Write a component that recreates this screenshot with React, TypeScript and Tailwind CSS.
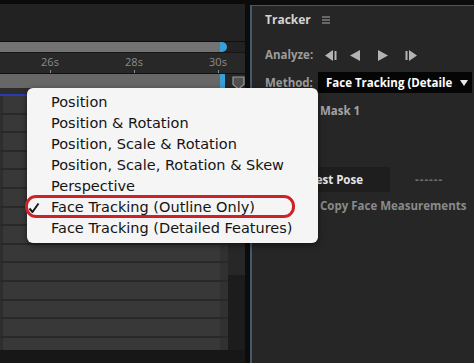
import React from "react";

const menuItems = [
  "Position",
  "Position & Rotation",
  "Position, Scale & Rotation",
  "Position, Scale, Rotation & Skew",
  "Perspective",
  "Face Tracking (Outline Only)",
  "Face Tracking (Detailed Features)",
];

const ruler = ["26s", "28s", "30s"];

function StepBack() {
  return (
    <svg width="12" height="11" viewBox="0 0 12 11">
      <path d="M0 5.5 L8 0 V11 Z" fill="#b4b4b4" />
      <rect x="9.5" y="1" width="2" height="9" fill="#b4b4b4" />
    </svg>
  );
}

function StepForward() {
  return (
    <svg width="12" height="11" viewBox="0 0 12 11">
      <rect x="0.5" y="1" width="2" height="9" fill="#b4b4b4" />
      <path d="M12 5.5 L4 0 V11 Z" fill="#b4b4b4" />
    </svg>
  );
}

function Play({ dir }: { dir: "left" | "right" }) {
  return (
    <svg width="10" height="11" viewBox="0 0 10 11">
      {dir === "left" ? (
        <path d="M0 5.5 L10 0 V11 Z" fill="#b4b4b4" />
      ) : (
        <path d="M10 5.5 L0 0 V11 Z" fill="#b4b4b4" />
      )}
    </svg>
  );
}

function Check() {
  return (
    <svg width="12" height="12" viewBox="0 0 12 12">
      <path d="M1.5 6.5 L4.5 10 L10.5 1.5" fill="none" stroke="#1a1a1a" strokeWidth="2" strokeLinejoin="round" />
    </svg>
  );
}

export default function App() {
  const rows = Array.from({ length: 14 });

  return (
    <div
      className="w-[474px] h-[363px] bg-[#0b0b0b] pt-[4px] flex relative overflow-hidden"
      style={{ fontFamily: "'Open Sans', 'DejaVu Sans', sans-serif" }}
    >
      {/* timeline */}
      <div className="w-[245px] flex flex-col bg-[#222222]">
        <div className="h-[37px]" />
        <div className="h-[1px] bg-[#0f0f0f]" />
        <div className="h-[10px] flex">
          <div className="w-[220px] bg-[#737373]" />
          <div className="w-[7px] bg-[#3b9fd7] rounded-r-full" />
        </div>
        <div className="h-[21px] bg-[#282828] border-t border-[#151515] flex pl-[34px] gap-[52px]">
          {ruler.map((t) => (
            <div key={t} className="w-[32px] flex flex-col items-center">
              <span className="text-[11px] leading-[15px] mt-[1px] text-[#8c8c8c]">{t}</span>
              <span className="w-px h-[3px] mt-[1px] bg-[#8c8c8c]" />
            </div>
          ))}
        </div>
        <div className="h-[1px] bg-[#111]" />
        <div className="h-[14px] flex bg-[#262626]">
          <div className="w-[220px] bg-[#676767]" />
          <div className="w-[5px] bg-[#3b9fd7]" />
          <svg className="ml-[7px] mt-[2px]" width="13" height="14" viewBox="0 0 13 14">
            <path d="M1 1 H12 V8.5 L6.5 13 L1 8.5 Z" fill="#505050" stroke="#9c9c9c" strokeWidth="1.2" />
          </svg>
        </div>
        <div className="h-[6px] bg-[#2c2c2c]" />
        <div className="h-[2px] w-[220px] bg-[#2a3cb3]" />
        <div className="h-[254px] flex overflow-hidden">
          <div className="w-[228px] flex flex-col">
            {rows.map((_, i) => (
              <div key={i} className="h-[18.6px] shrink-0 flex border-b-2 border-[#292929]">
                <div className="w-[3px] bg-[#2e2e2e]" />
                <div className="flex-1 bg-[#383838]" />
                <div className="w-[8px] bg-[#313131]" />
              </div>
            ))}
          </div>
          <div className="w-[17px] flex flex-col">
            <div className="h-[179px] bg-[#272727]" />
            <div className="flex-1 bg-[#1c1c1c]" />
          </div>
        </div>
        <div className="flex-1 bg-[#171717]" />
      </div>

      <div className="w-[5px] bg-[#0c0c0c]" />

      {/* tracker panel */}
      <div className="flex-1 mt-[1px] bg-[#262626] border-l-2 border-t border-[#44596b] pl-[13px] flex flex-col font-bold text-[11.5px]">
        <div className="h-[28px] flex items-center">
          <span className="text-[#d4d4d4] text-[12px]">Tracker</span>
          <svg className="ml-[11px]" width="8" height="8" viewBox="0 0 8 8">
            <path d="M0 1 H8 M0 4 H8 M0 7 H8" stroke="#a8a8a8" strokeWidth="1" />
          </svg>
        </div>
        <div className="h-[22px] mt-[10px] flex items-center">
          <span className="text-[#9c9c9c] w-[60px]">Analyze:</span>
          <StepBack />
          <span className="ml-[13px]">
            <Play dir="left" />
          </span>
          <span className="ml-[18px]">
            <Play dir="right" />
          </span>
          <span className="ml-[17px]">
            <StepForward />
          </span>
        </div>
        <div className="h-[21px] mt-[6px] flex items-center">
          <span className="text-[#9c9c9c] w-[53px]">Method:</span>
          <div className="w-[154px] h-full bg-[#050505] flex items-center pl-[8px] pr-[4px]">
            <span className="text-white whitespace-nowrap flex-1">Face Tracking (Detaile</span>
            <svg className="ml-[3px] shrink-0" width="8" height="6" viewBox="0 0 8 6">
              <path d="M0 0 H8 L4 6 Z" fill="#e8e8e8" />
            </svg>
          </div>
        </div>
        <div className="h-[16px] mt-[10px] ml-[55px] flex items-center text-[#a4a4a4]">Mask 1</div>
        <div className="h-[25px] mt-[48px] flex items-center">
          <div className="w-[125px] h-full bg-[#1e1e1e] flex items-center justify-end pr-[27px] text-[#e4e4e4] whitespace-nowrap">
            Extract Best Pose
          </div>
          <span className="ml-[25px] text-[#707070] tracking-[1px]">------</span>
        </div>
        <div className="h-[16px] mt-[6px] flex items-center">
          <div className="ml-[38px] w-[11px] h-[11px] border border-[#6a6a6a] bg-[#1c1c1c]" />
          <span className="ml-[6px] text-[#8a8a8a] whitespace-nowrap">Copy Face Measurements</span>
        </div>
      </div>

      {/* popup menu */}
      <div
        className="absolute left-[27px] top-[88px] w-[291px] h-[155px] bg-[#f5f5f5] rounded-[6px] shadow-[0_2px_6px_rgba(0,0,0,0.5)] py-[4.5px] text-[#141414] text-[14.5px]"
        style={{ fontFamily: "'DejaVu Sans', sans-serif" }}
      >
        {menuItems.map((item) => (
          <div key={item} className="h-[21px] flex items-center whitespace-nowrap">
            <span className="w-[24px] pl-[1px] flex items-center">
              {item === "Face Tracking (Outline Only)" ? <Check /> : null}
            </span>
            <span>{item}</span>
          </div>
        ))}
      </div>
      <div className="absolute left-[25px] top-[195px] w-[270px] h-[23px] border-[3px] border-[#cc2229] rounded-[11px]" />
    </div>
  );
}
